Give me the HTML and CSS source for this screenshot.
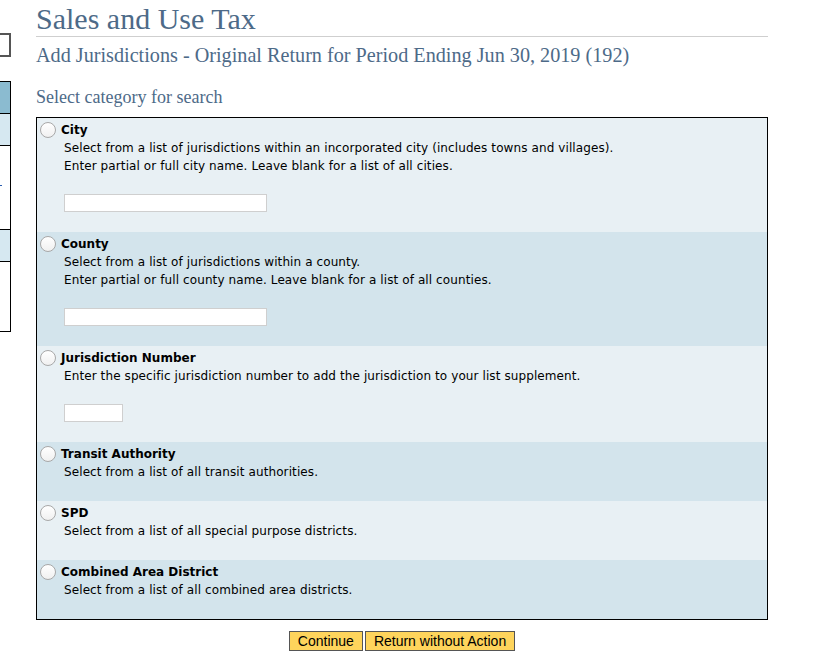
FILE: index.html
```html
<!DOCTYPE html>
<html>
<head>
<meta charset="utf-8">
<link rel="stylesheet" href="styles.css">
</head>
<body>
<div class="page">
  <div class="side">
    <div class="side-search"></div>
    <div class="side-nav">
      <div class="nav-row nav-head"></div>
      <div class="nav-row nav-light"></div>
      <div class="nav-row nav-white nav-tall"><span class="nav-dot"></span></div>
      <div class="nav-row nav-light"></div>
      <div class="nav-row nav-white nav-end"></div>
    </div>
  </div>
  <div class="main">
    <h1 class="title">Sales and Use Tax</h1>
    <h2 class="subtitle">Add Jurisdictions - Original Return for Period Ending Jun 30, 2019 (192)</h2>
    <h3 class="prompt">Select category for search</h3>
    <div class="options">
      <div class="opt light">
        <div class="opt-head"><span class="radio"></span><span class="opt-label">City</span></div>
        <div class="opt-body">
          <div>Select from a list of jurisdictions within an incorporated city (includes towns and villages).</div>
          <div>Enter partial or full city name. Leave blank for a list of all cities.</div>
          <div class="field wide"></div>
        </div>
      </div>
      <div class="opt dark">
        <div class="opt-head"><span class="radio"></span><span class="opt-label">County</span></div>
        <div class="opt-body">
          <div>Select from a list of jurisdictions within a county.</div>
          <div>Enter partial or full county name. Leave blank for a list of all counties.</div>
          <div class="field wide"></div>
        </div>
      </div>
      <div class="opt light">
        <div class="opt-head"><span class="radio"></span><span class="opt-label">Jurisdiction Number</span></div>
        <div class="opt-body">
          <div>Enter the specific jurisdiction number to add the jurisdiction to your list supplement.</div>
          <div class="field narrow"></div>
        </div>
      </div>
      <div class="opt dark simple">
        <div class="opt-head"><span class="radio"></span><span class="opt-label">Transit Authority</span></div>
        <div class="opt-body">
          <div>Select from a list of all transit authorities.</div>
        </div>
      </div>
      <div class="opt light simple">
        <div class="opt-head"><span class="radio"></span><span class="opt-label">SPD</span></div>
        <div class="opt-body">
          <div>Select from a list of all special purpose districts.</div>
        </div>
      </div>
      <div class="opt dark simple">
        <div class="opt-head"><span class="radio"></span><span class="opt-label">Combined Area District</span></div>
        <div class="opt-body">
          <div>Select from a list of all combined area districts.</div>
        </div>
      </div>
    </div>
    <div class="actions">
      <button class="btn">Continue</button>
      <button class="btn">Return without Action</button>
    </div>
  </div>
</div>
</body>
</html>
```

FILE: styles.css
```css
html, body {
  margin: 0;
  padding: 0;
  background: #fff;
}

body {
  font-family: "DejaVu Sans", Verdana, sans-serif;
  font-size: 12px;
  color: #000;
}

.page {
  display: flex;
  gap: 25px;
}

.side {
  width: 11px;
  flex: none;
  overflow: hidden;
  padding-top: 33px;
}

.side-search {
  margin-left: -20px;
  width: 27px;
  height: 20px;
  border: 2px solid #555;
  background: #fff;
}

.side-nav {
  margin-top: 24px;
  margin-left: -20px;
  width: 29px;
  border: 1px solid #000;
}

.nav-row {
  height: 32px;
  border-bottom: 1px solid #000;
  box-sizing: border-box;
  position: relative;
}

.nav-head { background: #8bbbd0; }
.nav-light { background: #d6e8f1; }
.nav-white { background: #fff; }
.nav-tall { height: 84px; }
.nav-end { height: 69px; border-bottom: 0; }

.nav-dot {
  position: absolute;
  left: 19px;
  top: 39px;
  width: 2px;
  height: 1px;
  background: #2a5db0;
}

.main {
  width: 732px;
  flex: none;
}

.title {
  margin: 0;
  padding-top: 3px;
  font-family: "Liberation Serif", "DejaVu Serif", serif;
  font-weight: normal;
  font-size: 30px;
  line-height: 31px;
  color: #4d6a88;
  border-bottom: 1px solid #cfcfcf;
  padding-bottom: 2px;
}

.subtitle {
  margin: 6px 0 0;
  font-family: "Liberation Serif", "DejaVu Serif", serif;
  font-weight: normal;
  font-size: 20.2px;
  line-height: 24px;
  color: #4d6a88;
}

.prompt {
  margin: 20px 0 0;
  font-family: "Liberation Serif", "DejaVu Serif", serif;
  font-weight: normal;
  font-size: 18px;
  line-height: 20px;
  color: #4d6a88;
}

.options {
  margin-top: 10px;
  border: 1px solid #000;
}

.opt {
  padding: 3px 0 20px;
  line-height: 18px;
}

.opt.simple {
  padding-bottom: 20px;
}

.light { background: #e8f0f4; }
.dark { background: #d3e4ec; }

.opt-head {
  display: flex;
  align-items: center;
  height: 18px;
}

.radio {
  width: 16px;
  height: 16px;
  margin-left: 3px;
  margin-right: 5px;
  border: 1px solid #a8a8a8;
  border-radius: 50%;
  background: linear-gradient(#ffffff, #f0f0f0);
  box-sizing: border-box;
}

.opt-label {
  font-weight: bold;
  font-size: 12px;
}

.opt-body {
  padding-left: 27px;
  font-size: 12px;
  letter-spacing: 0.1px;
}

.field {
  margin-top: 19px;
  height: 18px;
  background: #fff;
  border: 1px solid #cfcfcf;
  box-sizing: border-box;
}

.field.wide { width: 203px; }
.field.narrow { width: 59px; }

.actions {
  display: flex;
  justify-content: center;
  gap: 2px;
  margin-top: 11px;
}

.btn {
  font-family: "Liberation Sans", Arial, sans-serif;
  font-size: 14px;
  height: 20px;
  line-height: 18px;
  padding: 0 8px;
  background: #fed45c;
  border: 1px solid #555;
  color: #000;
  border-radius: 0;
}
```
